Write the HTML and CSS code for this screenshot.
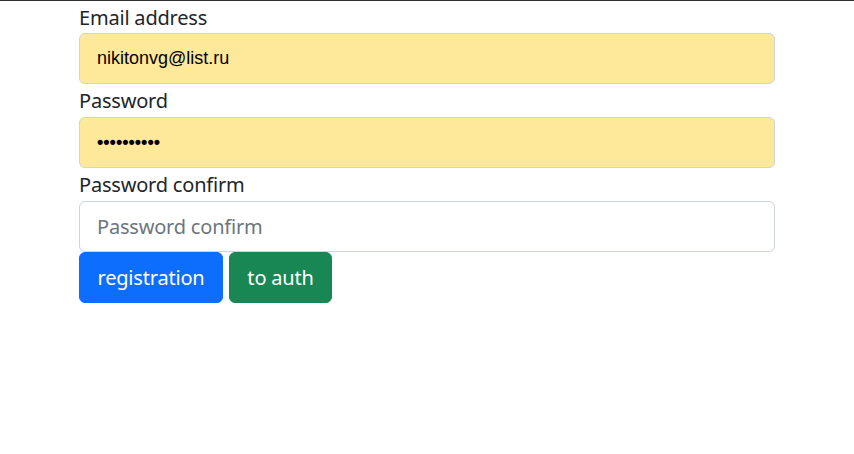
FILE: index.html
```html
<!DOCTYPE html>
<html lang="en">
<head>
<meta charset="utf-8">
<title>Registration</title>
<link rel="stylesheet" href="styles.css">
</head>
<body>
<div class="topline"></div>
<div class="container">
  <form class="form">
    <label class="form-label" for="email">Email address</label>
    <div class="form-control autofill" id="email"><span class="auto-text">nikitonvg@list.ru</span></div>
    <label class="form-label" for="pass">Password</label>
    <div class="form-control autofill" id="pass"><span class="dots">••••••••••</span></div>
    <label class="form-label" for="confirm">Password confirm</label>
    <div class="form-control" id="confirm"><span class="placeholder">Password confirm</span></div>
    <div class="buttons">
      <button type="button" class="btn btn-primary">registration</button>
      <button type="button" class="btn btn-success">to auth</button>
    </div>
  </form>
</div>
</body>
</html>
```

FILE: styles.css
```css
* { box-sizing: border-box; }
html, body { margin: 0; padding: 0; background: #fff; }
body {
  font-family: "Noto Sans", "Open Sans", sans-serif;
  color: #212529;
}
.topline { height: 1px; background: #2e2e30; }
.container {
  width: 720px;
  margin: 0 auto;
  padding: 0 12px;
}
.form { display: flex; flex-direction: column; }
.form-label {
  display: block;
  height: 32px;
  font-size: 20px;
  line-height: 34px;
  letter-spacing: -0.2px;
}
.form-control ~ .form-label { height: 33px; line-height: 33px; }
.form-control {
  height: 51px;
  border: 1px solid #ced4da;
  border-radius: 6px;
  padding: 0 17px;
  display: flex;
  align-items: center;
  background: #fff;
}
.autofill { background: #fee89a; }
.auto-text {
  font-family: "Liberation Sans", Arial, sans-serif;
  font-size: 18px;
  color: #000;
}
.dots {
  font-family: "Liberation Sans", Arial, sans-serif;
  font-size: 18px;
  font-weight: bold;
  color: #000;
}
.placeholder {
  font-size: 20px;
  color: #6c757d;
  letter-spacing: -0.2px;
}
.buttons { display: flex; gap: 6px; }
.btn {
  height: 51px;
  border: 1px solid transparent;
  border-radius: 6px;
  padding: 0;
  text-align: center;
  font-family: "Noto Sans", "Open Sans", sans-serif;
  font-size: 20px;
  color: #fff;
  letter-spacing: -0.2px;
}
.btn-primary { width: 144px; background: #0d6efd; border-color: #0d6efd; }
.btn-success { width: 103px; background: #198754; border-color: #198754; }
```
